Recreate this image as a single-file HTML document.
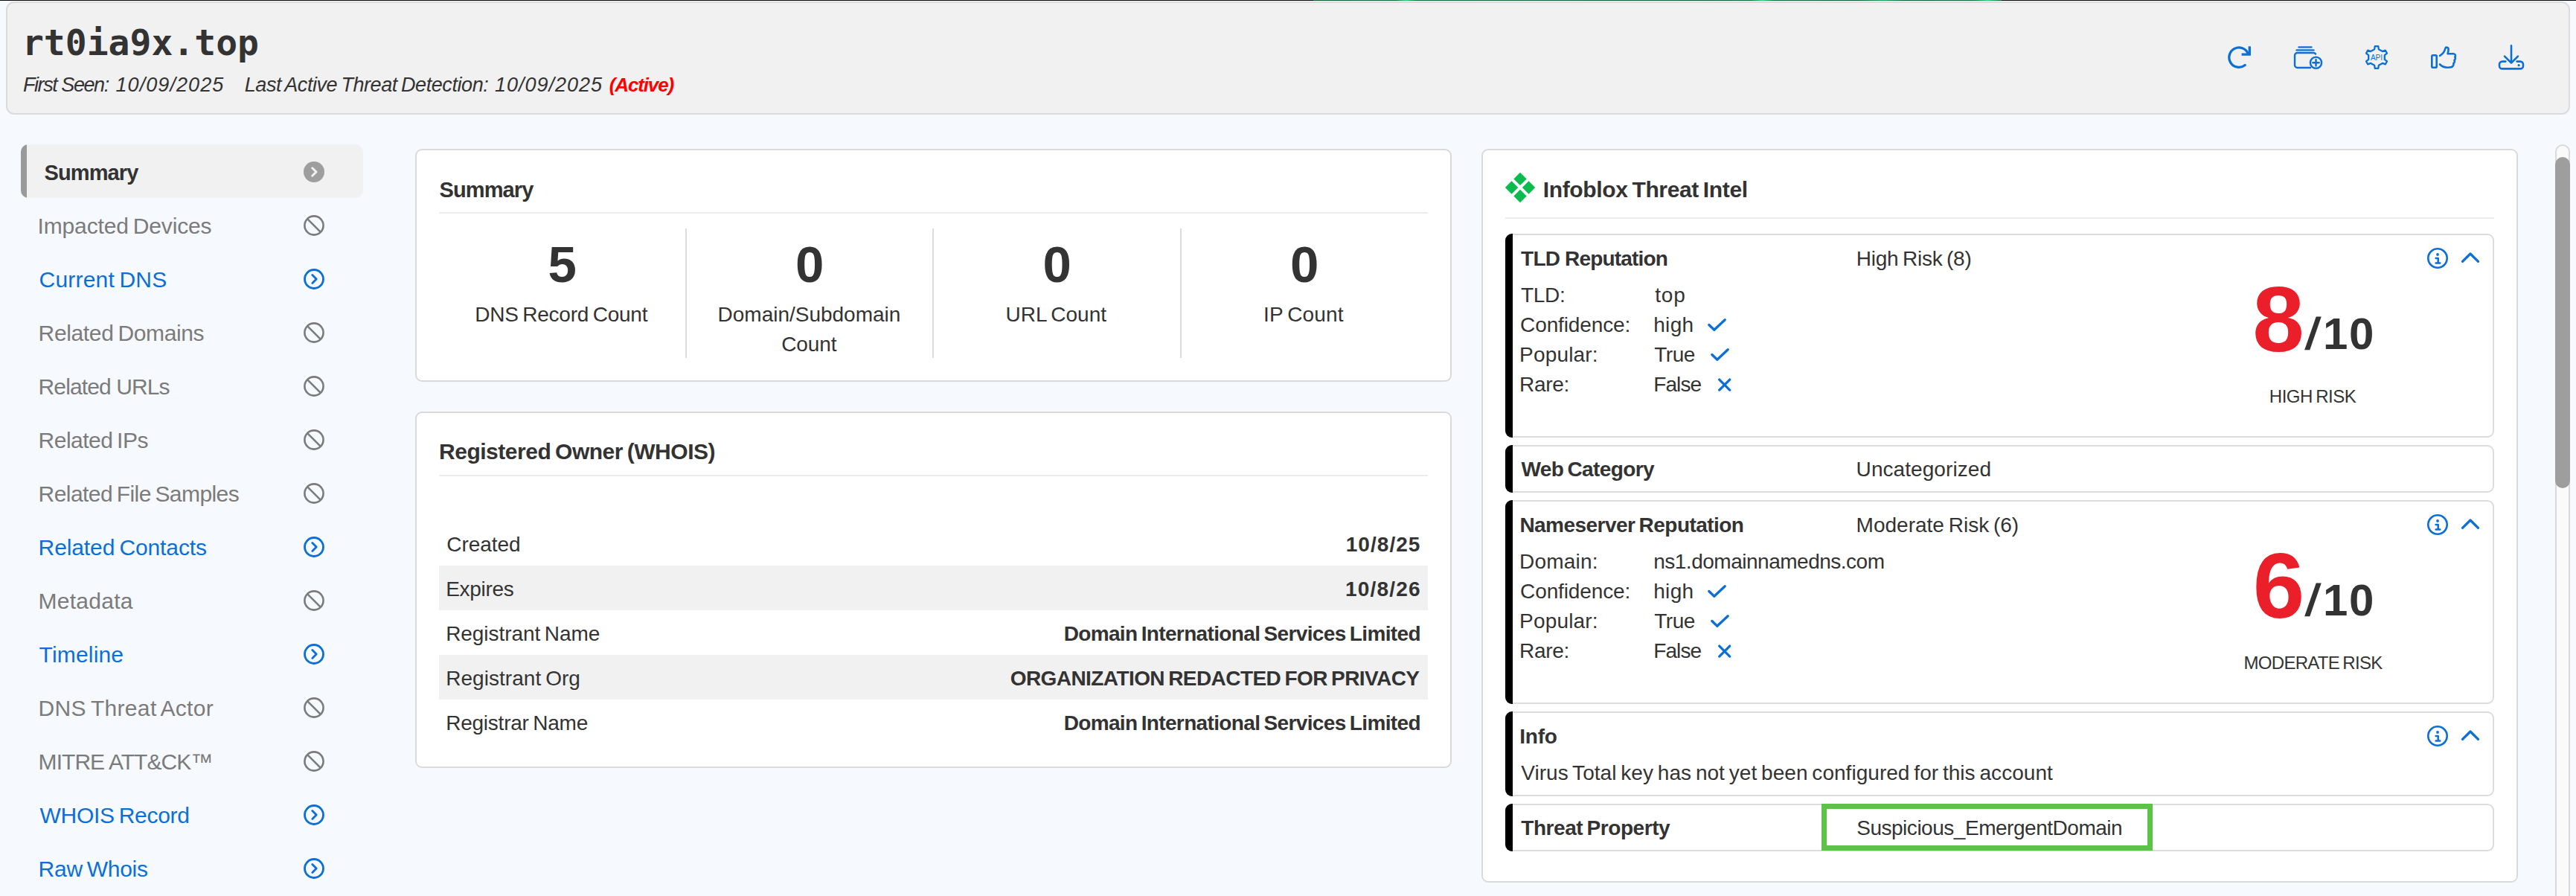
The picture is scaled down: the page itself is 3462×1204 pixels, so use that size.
<!DOCTYPE html>
<html lang="en">
<head>
<meta charset="utf-8">
<title>rt0ia9x.top</title>
<style>
:root{--f:"Liberation Sans",sans-serif;}
*{box-sizing:border-box;margin:0;padding:0;}
html,body{width:3462px;height:1204px;overflow:hidden;}
body{background:#f6f9fe;font-family:var(--f);color:#333;font-size:28px;line-height:40px;position:relative;}
.abs{position:absolute;}
.t{position:absolute;white-space:nowrap;line-height:40px;height:40px;font-weight:normal;}
.topline{position:absolute;left:0;top:0;width:3462px;height:1px;background:#0a0a0a;}
.topline i{position:absolute;left:1765px;top:0;width:925px;height:1px;background:linear-gradient(90deg,#0a5a28 0%,#0b6b30 12%,#1fd46a 13.5%,#0b6b30 15%,#0a5a28 58%,#0b6b30 63.5%,#1fd46a 65.2%,#0b6b30 67%,#0a5a28 79%,#15a551 82.8%,#0a5a28 86%,#0b6b30 96%,#1fd46a 98%,#0a5a28 100%);}
.hdr{position:absolute;left:8px;top:2px;width:3446px;height:152px;background:#f1f1f1;border:2px solid #dbdbdb;border-radius:11px;}
.card{position:absolute;background:#fff;border:2px solid #dadada;border-radius:9px;}
.hr{position:absolute;height:2px;background:#ececec;}
.vr{position:absolute;width:2px;background:#dcdcdc;}
.box{position:absolute;left:2023px;width:1329px;background:#fff;border:2px solid #dcdcdc;border-left:none;border-radius:9px;}
.box:before{content:"";position:absolute;left:0;top:-2px;bottom:-2px;width:10px;background:#000;border-radius:9px 0 0 9px;}
.ic{position:absolute;}
</style>
</head>
<body>
<div class="topline"><i></i></div>
<header>
<div class="hdr"></div>
<h1 class="t" id="title" style="left:29.90px;top:37.01px;font-size:48px;font-weight:bold;font-family:'DejaVu Sans Mono','Liberation Mono',monospace;letter-spacing:0.020px;">rt0ia9x.top</h1>
<div class="t" id="sub1" style="left:31.00px;top:93.50px;font-size:27px;font-style:italic;letter-spacing:-1.440px;">First Seen:</div>
<div class="t" id="sub1b" style="left:155.50px;top:93.50px;font-size:27px;font-style:italic;letter-spacing:1.067px;">10/09/2025</div>
<div class="t" id="sub2" style="left:328.75px;top:93.50px;font-size:27px;font-style:italic;letter-spacing:-0.429px;word-spacing:-1.890px;">Last Active Threat Detection:</div>
<div class="t" id="sub2b" style="left:665.00px;top:93.50px;font-size:27px;font-style:italic;letter-spacing:1.000px;">10/09/2025</div>
<div class="t" id="sub3" style="left:818.75px;top:93.51px;font-size:26px;font-weight:bold;font-style:italic;color:#ff0000;letter-spacing:-1.143px;">(Active)</div>
<svg class="ic" style="left:2990px;top:58px" width="40" height="40" viewBox="0 0 40 40" fill="none" stroke="#0b6fd6" stroke-width="3.3" stroke-linecap="round" stroke-linejoin="round"><path d="M27.2 29.5A13.2 13.2 0 1 1 31.3 14.3"/><path d="M33.3 4.2V15.2H22.6" stroke-linecap="butt" stroke-linejoin="miter"/></svg>
<svg class="ic" style="left:3080px;top:58px" width="44" height="40" viewBox="0 0 44 40" fill="none" stroke="#0b6fd6" stroke-width="2.4" stroke-linecap="round" stroke-linejoin="round"><path d="M9.5 5.4H26.5M6.5 9.4H29.5"/><path d="M32 14.5A3.5 3.5 0 0 0 29 13H7.5A3.5 3.5 0 0 0 4 16.500V29.500A3.500 3.500 0 0 0 7.500 33H25"/><circle cx="32.500" cy="26.200" r="7.600"/><path d="M32.500 22V30.400M28.300 26.200H36.700"/></svg>
<svg class="ic" style="left:3174px;top:56px" width="40" height="42" viewBox="0 0 40 42" fill="none" stroke="#0b6fd6" stroke-width="2.3" stroke-linejoin="round"><path d="M17.12 10.18 L17.76 6.17 L22.24 6.17 L22.88 10.18 L27.93 13.09 L31.72 11.64 L33.97 15.53 L30.81 18.09 L30.81 23.91 L33.97 26.47 L31.72 30.36 L27.93 28.91 L22.88 31.82 L22.24 35.83 L17.76 35.83 L17.12 31.82 L12.07 28.91 L8.28 30.36 L6.03 26.47 L9.19 23.91 L9.19 18.09 L6.03 15.53 L8.28 11.64 L12.07 13.09Z"/><text x="20" y="24.700" font-family="Liberation Sans, sans-serif" font-size="10" fill="#0b6fd6" stroke="none" text-anchor="middle">API</text></svg>
<svg class="ic" style="left:3264px;top:58px" width="40" height="40" viewBox="0 0 40 40" fill="none" stroke="#0b6fd6" stroke-width="2.6" stroke-linecap="round" stroke-linejoin="round"><rect x="4.300" y="16.300" width="6.400" height="16.400" rx="1.500"/><path d="M15 16.800C19 14.500 21.500 10.500 22.300 7.200C23 4.800 26.600 5.300 26.600 8.500C26.600 10.500 26 12.500 25.500 14.200H33.200C36 14.200 36.800 17.200 35.200 18.600C36.400 20 35.800 22.200 34.400 22.900C35.400 24.400 34.700 26.400 33.300 27.100C34 28.800 33 31 31 32C29.500 32.700 27.500 32.700 25 32.700C20.500 32.700 18 31.500 15 28.500"/></svg>
<svg class="ic" style="left:3354px;top:56px" width="42" height="42" viewBox="0 0 42 42" fill="none" stroke="#0b6fd6" stroke-width="2.600" stroke-linecap="round" stroke-linejoin="round"><path d="M21 5.200V28.400M12 19.600L21 28.600L30 19.600"/><path d="M13.400 26.600H9A4 4 0 0 0 5 30.600V32.400A4 4 0 0 0 9 36.400H33A4 4 0 0 0 37 32.400V30.600A4 4 0 0 0 33 26.600H28.600"/><circle cx="31.100" cy="31.700" r="1.600" fill="#0b6fd6" stroke="none"/></svg>
</header>
<nav>
<div class="abs" style="left:28px;top:194px;width:460px;height:72px;background:#f1f1f1;border-radius:10px;overflow:hidden;"><div style="width:8px;height:72px;background:#9a9a9a;"></div></div>
<svg class="ic" style="left:406px;top:214.5px" width="32" height="32" viewBox="0 0 32 32"><circle cx="16" cy="16" r="14" fill="#9e9e9e"/><path d="M13.700 10.800L19 16L13.700 21.200" fill="none" stroke="#f1f1f1" stroke-width="3" stroke-linecap="round" stroke-linejoin="round"/></svg>
<svg class="ic" style="left:406px;top:286.5px" width="32" height="32" viewBox="0 0 32 32" fill="none" stroke="#7b7b7b" stroke-width="2.600"><circle cx="16" cy="16" r="12.600"/><path d="M7.100 7.100L24.900 24.900"/></svg>
<svg class="ic" style="left:406px;top:358.5px" width="32" height="32" viewBox="0 0 32 32" fill="none" stroke="#0b6fd6" stroke-width="2.800" stroke-linecap="round" stroke-linejoin="round"><circle cx="16" cy="16" r="12.500"/><path d="M13.800 10.600L19.200 16L13.800 21.400"/></svg>
<svg class="ic" style="left:406px;top:430.5px" width="32" height="32" viewBox="0 0 32 32" fill="none" stroke="#7b7b7b" stroke-width="2.600"><circle cx="16" cy="16" r="12.600"/><path d="M7.100 7.100L24.900 24.900"/></svg>
<svg class="ic" style="left:406px;top:502.5px" width="32" height="32" viewBox="0 0 32 32" fill="none" stroke="#7b7b7b" stroke-width="2.600"><circle cx="16" cy="16" r="12.600"/><path d="M7.100 7.100L24.900 24.900"/></svg>
<svg class="ic" style="left:406px;top:574.5px" width="32" height="32" viewBox="0 0 32 32" fill="none" stroke="#7b7b7b" stroke-width="2.600"><circle cx="16" cy="16" r="12.600"/><path d="M7.100 7.100L24.900 24.900"/></svg>
<svg class="ic" style="left:406px;top:646.5px" width="32" height="32" viewBox="0 0 32 32" fill="none" stroke="#7b7b7b" stroke-width="2.600"><circle cx="16" cy="16" r="12.600"/><path d="M7.100 7.100L24.900 24.900"/></svg>
<svg class="ic" style="left:406px;top:718.5px" width="32" height="32" viewBox="0 0 32 32" fill="none" stroke="#0b6fd6" stroke-width="2.800" stroke-linecap="round" stroke-linejoin="round"><circle cx="16" cy="16" r="12.500"/><path d="M13.800 10.600L19.200 16L13.800 21.400"/></svg>
<svg class="ic" style="left:406px;top:790.5px" width="32" height="32" viewBox="0 0 32 32" fill="none" stroke="#7b7b7b" stroke-width="2.600"><circle cx="16" cy="16" r="12.600"/><path d="M7.100 7.100L24.900 24.900"/></svg>
<svg class="ic" style="left:406px;top:862.5px" width="32" height="32" viewBox="0 0 32 32" fill="none" stroke="#0b6fd6" stroke-width="2.800" stroke-linecap="round" stroke-linejoin="round"><circle cx="16" cy="16" r="12.500"/><path d="M13.800 10.600L19.200 16L13.800 21.400"/></svg>
<svg class="ic" style="left:406px;top:934.5px" width="32" height="32" viewBox="0 0 32 32" fill="none" stroke="#7b7b7b" stroke-width="2.600"><circle cx="16" cy="16" r="12.600"/><path d="M7.100 7.100L24.900 24.900"/></svg>
<svg class="ic" style="left:406px;top:1006.5px" width="32" height="32" viewBox="0 0 32 32" fill="none" stroke="#7b7b7b" stroke-width="2.600"><circle cx="16" cy="16" r="12.600"/><path d="M7.100 7.100L24.900 24.900"/></svg>
<svg class="ic" style="left:406px;top:1078.5px" width="32" height="32" viewBox="0 0 32 32" fill="none" stroke="#0b6fd6" stroke-width="2.800" stroke-linecap="round" stroke-linejoin="round"><circle cx="16" cy="16" r="12.500"/><path d="M13.800 10.600L19.200 16L13.800 21.400"/></svg>
<svg class="ic" style="left:406px;top:1150.5px" width="32" height="32" viewBox="0 0 32 32" fill="none" stroke="#0b6fd6" stroke-width="2.800" stroke-linecap="round" stroke-linejoin="round"><circle cx="16" cy="16" r="12.500"/><path d="M13.800 10.600L19.200 16L13.800 21.400"/></svg>
<div class="t" id="n0" style="left:59.60px;top:211.81px;font-size:29px;font-weight:bold;letter-spacing:-0.900px;">Summary</div>
<div class="t" id="n1" style="left:50.60px;top:283.81px;font-size:30px;color:#7b7b7b;letter-spacing:-0.160px;word-spacing:-2.100px;">Impacted Devices</div>
<div class="t" id="n2" style="left:52.60px;top:355.81px;font-size:30px;color:#0b6fd6;letter-spacing:0.200px;word-spacing:-2.100px;">Current DNS</div>
<div class="t" id="n3" style="left:51.60px;top:427.81px;font-size:30px;color:#7b7b7b;letter-spacing:-0.357px;word-spacing:-2.100px;">Related Domains</div>
<div class="t" id="n4" style="left:51.60px;top:499.81px;font-size:30px;color:#7b7b7b;letter-spacing:-0.891px;">Related URLs</div>
<div class="t" id="n5" style="left:51.60px;top:571.81px;font-size:30px;color:#7b7b7b;letter-spacing:-0.520px;word-spacing:-2.100px;">Related IPs</div>
<div class="t" id="n6" style="left:51.60px;top:643.81px;font-size:30px;color:#7b7b7b;letter-spacing:-0.568px;word-spacing:-2.100px;">Related File Samples</div>
<div class="t" id="n7" style="left:51.60px;top:715.81px;font-size:30px;color:#0b6fd6;letter-spacing:-0.107px;word-spacing:-2.100px;">Related Contacts</div>
<div class="t" id="n8" style="left:51.60px;top:787.81px;font-size:30px;color:#7b7b7b;letter-spacing:0.257px;">Metadata</div>
<div class="t" id="n9" style="left:52.60px;top:859.81px;font-size:30px;color:#0b6fd6;letter-spacing:0.171px;">Timeline</div>
<div class="t" id="n10" style="left:51.60px;top:931.81px;font-size:30px;color:#7b7b7b;letter-spacing:0.320px;word-spacing:-2.100px;">DNS Threat Actor</div>
<div class="t" id="n11" style="left:51.60px;top:1003.81px;font-size:30px;color:#7b7b7b;letter-spacing:-0.950px;">MITRE ATT&amp;CK™</div>
<div class="t" id="n12" style="left:53.60px;top:1075.81px;font-size:30px;color:#0b6fd6;letter-spacing:-0.291px;word-spacing:-2.100px;">WHOIS Record</div>
<div class="t" id="n13" style="left:51.60px;top:1147.81px;font-size:30px;color:#0b6fd6;letter-spacing:-0.275px;word-spacing:-2.100px;">Raw Whois</div>
</nav>
<main>
<section>
<div class="card" style="left:558px;top:200px;width:1393px;height:313px;"></div>
<div class="hr" style="left:590px;top:285px;width:1329px;"></div>
<div class="vr" style="left:921px;top:307px;height:174px;"></div>
<div class="vr" style="left:1253px;top:307px;height:174px;"></div>
<div class="vr" style="left:1586px;top:307px;height:174px;"></div>
<h2 class="t" id="h_sum" style="left:590.50px;top:235.00px;font-size:29px;font-weight:bold;letter-spacing:-0.900px;">Summary</h2>
<div class="t" id="big0" style="left:736.50px;top:335.61px;font-size:69px;font-weight:bold;">5</div>
<div class="t" id="lbl0" style="left:638.30px;top:403.01px;font-size:28px;letter-spacing:-0.240px;word-spacing:-1.960px;">DNS Record Count</div>
<div class="t" id="big1" style="left:1069.00px;top:335.61px;font-size:69px;font-weight:bold;">0</div>
<div class="t" id="lbl1" style="left:964.60px;top:403.01px;font-size:28px;letter-spacing:-0.013px;">Domain/Subdomain</div>
<div class="t" id="big2" style="left:1401.50px;top:335.61px;font-size:69px;font-weight:bold;">0</div>
<div class="t" id="lbl2" style="left:1351.50px;top:403.01px;font-size:28px;word-spacing:-1.960px;">URL Count</div>
<div class="t" id="big3" style="left:1734.00px;top:335.61px;font-size:69px;font-weight:bold;">0</div>
<div class="t" id="lbl3" style="left:1698.00px;top:403.01px;font-size:28px;letter-spacing:0.143px;word-spacing:-1.960px;">IP Count</div>
<div class="t" id="lbl1b" style="left:1050.20px;top:443.01px;font-size:28px;letter-spacing:-0.100px;">Count</div>
</section>
<section>
<div class="card" style="left:558px;top:553px;width:1393px;height:479px;"></div>
<div class="hr" style="left:590px;top:638px;width:1329px;"></div>
<div class="abs" style="left:590px;top:760px;width:1329px;height:60px;background:#f1f1f1;"></div>
<div class="abs" style="left:590px;top:880px;width:1329px;height:60px;background:#f1f1f1;"></div>
<h2 class="t" id="h_who" style="left:590.00px;top:587.00px;font-size:30px;font-weight:bold;letter-spacing:-0.478px;word-spacing:-2.100px;">Registered Owner (WHOIS)</h2>
<div class="t" id="wk0" style="left:600.20px;top:711.81px;font-size:28px;letter-spacing:-0.033px;">Created</div>
<div class="t" id="wv0" style="left:1808.64px;top:711.81px;font-size:28px;font-weight:bold;letter-spacing:1.067px;">10/8/25</div>
<div class="t" id="wk1" style="left:599.20px;top:771.81px;font-size:28px;letter-spacing:-0.300px;">Expires</div>
<div class="t" id="wv1" style="left:1808.04px;top:771.81px;font-size:28px;font-weight:bold;letter-spacing:1.167px;">10/8/26</div>
<div class="t" id="wk2" style="left:599.20px;top:831.81px;font-size:28px;letter-spacing:-0.071px;word-spacing:-1.960px;">Registrant Name</div>
<div class="t" id="wv2" style="left:1429.64px;top:831.81px;font-size:28px;font-weight:bold;letter-spacing:-0.639px;word-spacing:-1.960px;">Domain International Services Limited</div>
<div class="t" id="wk3" style="left:599.20px;top:891.81px;font-size:28px;letter-spacing:0.046px;word-spacing:-1.960px;">Registrant Org</div>
<div class="t" id="wv3" style="left:1357.76px;top:891.81px;font-size:28px;font-weight:bold;letter-spacing:-0.575px;word-spacing:-1.960px;">ORGANIZATION REDACTED FOR PRIVACY</div>
<div class="t" id="wk4" style="left:599.20px;top:951.81px;font-size:28px;letter-spacing:-0.231px;word-spacing:-1.960px;">Registrar Name</div>
<div class="t" id="wv4" style="left:1429.64px;top:951.81px;font-size:28px;font-weight:bold;letter-spacing:-0.639px;word-spacing:-1.960px;">Domain International Services Limited</div>
</section>
<section>
<div class="card" style="left:1991px;top:200px;width:1393px;height:986px;"></div>
<svg class="ic" style="left:2022px;top:231px" width="42" height="42" viewBox="0 0 42 42"><g fill="#0abb4d"><path d="M21 0.70L29.70 9.4L21 18.10L12.30 9.4Z"/><path d="M21 23.80L29.70 32.5L21 41.20L12.30 32.5Z"/><path d="M9.5 12.30L18.20 21L9.5 29.70L0.80 21Z"/><path d="M32.5 12.30L41.20 21L32.5 29.70L23.80 21Z"/></g></svg>
<div class="hr" style="left:2023px;top:292px;width:1329px;"></div>

<div class="box" style="top:314px;height:274px;"></div>
<svg class="ic" style="left:2292px;top:425px" width="32" height="24" viewBox="0 0 32 24" fill="none" stroke="#0b6fd6" stroke-width="3.300" stroke-linecap="round" stroke-linejoin="round"><path d="M4.800 11.500L11.800 18.300L26.200 4.700"/></svg><svg class="ic" style="left:2296px;top:465px" width="32" height="24" viewBox="0 0 32 24" fill="none" stroke="#0b6fd6" stroke-width="3.300" stroke-linecap="round" stroke-linejoin="round"><path d="M4.800 11.500L11.800 18.300L26.200 4.700"/></svg><svg class="ic" style="left:2306px;top:505px" width="24" height="24" viewBox="0 0 24 24" fill="none" stroke="#0b6fd6" stroke-width="3.300" stroke-linecap="round"><path d="M4.700 5.100L18.700 19.100M18.700 5.100L4.700 19.100"/></svg>
<svg class="ic" style="left:3260px;top:330.5px" width="32" height="32" viewBox="0 0 32 32" fill="none" stroke="#0b6fd6" stroke-width="2.600" stroke-linecap="round" stroke-linejoin="round"><circle cx="16" cy="16" r="12.700"/><circle cx="16" cy="11" r="1.900" fill="#0b6fd6" stroke="none"/><path d="M13.600 15.900H16.700V22.300M13.600 22.400H19.300" stroke-width="2.500"/></svg><svg class="ic" style="left:3304px;top:330.5px" width="32" height="32" viewBox="0 0 32 32" fill="none" stroke="#0b6fd6" stroke-width="3.300" stroke-linecap="round" stroke-linejoin="round"><path d="M5.500 20.400L16 10L26.500 20.400"/></svg>

<div class="box" style="top:598px;height:64px;"></div>

<div class="box" style="top:672px;height:274px;"></div>
<svg class="ic" style="left:2292px;top:783px" width="32" height="24" viewBox="0 0 32 24" fill="none" stroke="#0b6fd6" stroke-width="3.300" stroke-linecap="round" stroke-linejoin="round"><path d="M4.800 11.500L11.800 18.300L26.200 4.700"/></svg><svg class="ic" style="left:2296px;top:823px" width="32" height="24" viewBox="0 0 32 24" fill="none" stroke="#0b6fd6" stroke-width="3.300" stroke-linecap="round" stroke-linejoin="round"><path d="M4.800 11.500L11.800 18.300L26.200 4.700"/></svg><svg class="ic" style="left:2306px;top:863px" width="24" height="24" viewBox="0 0 24 24" fill="none" stroke="#0b6fd6" stroke-width="3.300" stroke-linecap="round"><path d="M4.700 5.100L18.700 19.100M18.700 5.100L4.700 19.100"/></svg>
<svg class="ic" style="left:3260px;top:688.5px" width="32" height="32" viewBox="0 0 32 32" fill="none" stroke="#0b6fd6" stroke-width="2.600" stroke-linecap="round" stroke-linejoin="round"><circle cx="16" cy="16" r="12.700"/><circle cx="16" cy="11" r="1.900" fill="#0b6fd6" stroke="none"/><path d="M13.600 15.900H16.700V22.300M13.600 22.400H19.300" stroke-width="2.500"/></svg><svg class="ic" style="left:3304px;top:688.5px" width="32" height="32" viewBox="0 0 32 32" fill="none" stroke="#0b6fd6" stroke-width="3.300" stroke-linecap="round" stroke-linejoin="round"><path d="M5.500 20.400L16 10L26.500 20.400"/></svg>

<div class="box" style="top:956px;height:114px;"></div>
<svg class="ic" style="left:3260px;top:972.5px" width="32" height="32" viewBox="0 0 32 32" fill="none" stroke="#0b6fd6" stroke-width="2.600" stroke-linecap="round" stroke-linejoin="round"><circle cx="16" cy="16" r="12.700"/><circle cx="16" cy="11" r="1.900" fill="#0b6fd6" stroke="none"/><path d="M13.600 15.900H16.700V22.300M13.600 22.400H19.300" stroke-width="2.500"/></svg><svg class="ic" style="left:3304px;top:972.5px" width="32" height="32" viewBox="0 0 32 32" fill="none" stroke="#0b6fd6" stroke-width="3.300" stroke-linecap="round" stroke-linejoin="round"><path d="M5.500 20.400L16 10L26.500 20.400"/></svg>

<div class="box" style="top:1080px;height:64px;"></div>
<div class="abs" style="left:2447.5px;top:1079.5px;width:445px;height:63px;border:7px solid #5cc248;"></div>
<h2 class="t" id="h_ti" style="left:2073.80px;top:235.00px;font-size:30px;font-weight:bold;letter-spacing:-0.360px;word-spacing:-2.100px;">Infoblox Threat Intel</h2>
<div class="t" id="tld_h" style="left:2044.10px;top:327.60px;font-size:28px;font-weight:bold;letter-spacing:-0.815px;">TLD Reputation</div>
<div class="t" id="tld_r" style="left:2494.70px;top:327.60px;font-size:28px;letter-spacing:-0.233px;word-spacing:-1.960px;">High Risk (8)</div>
<div class="t" id="tk0" style="left:2044.10px;top:377.31px;font-size:28px;letter-spacing:-0.333px;">TLD:</div>
<div class="t" id="tv0" style="left:2224.20px;top:377.31px;font-size:28px;letter-spacing:0.900px;">top</div>
<div class="t" id="tk1" style="left:2043.10px;top:417.31px;font-size:28px;letter-spacing:-0.120px;">Confidence:</div>
<div class="t" id="tv1" style="left:2222.20px;top:417.31px;font-size:28px;letter-spacing:0.333px;">high</div>
<div class="t" id="tk2" style="left:2042.10px;top:457.31px;font-size:28px;letter-spacing:0.171px;">Popular:</div>
<div class="t" id="tv2" style="left:2223.20px;top:457.31px;font-size:28px;letter-spacing:-0.467px;">True</div>
<div class="t" id="tk3" style="left:2042.10px;top:497.31px;font-size:28px;letter-spacing:-0.300px;">Rare:</div>
<div class="t" id="tv3" style="left:2222.20px;top:497.31px;font-size:28px;letter-spacing:-0.900px;">False</div>
<div class="t" id="s8" style="left:3027.20px;top:409.31px;font-size:125px;font-weight:bold;color:#ea1f29;">8</div>
<div class="t" id="s8s" style="left:3099.50px;top:429.00px;font-size:60px;font-weight:bold;transform:skewX(-9deg);">/</div>
<div class="t" id="s8b" style="left:3122.00px;top:429.00px;font-size:60px;font-weight:bold;letter-spacing:1.600px;">10</div>
<div class="t" id="s8l" style="left:3049.80px;top:513.40px;font-size:24px;letter-spacing:-0.500px;word-spacing:-1.680px;">HIGH RISK</div>
<div class="t" id="wc_h" style="left:2044.40px;top:611.01px;font-size:28px;font-weight:bold;letter-spacing:-0.600px;word-spacing:-1.960px;">Web Category</div>
<div class="t" id="wc_v" style="left:2494.60px;top:611.01px;font-size:28px;letter-spacing:0.067px;">Uncategorized</div>
<div class="t" id="ns_h" style="left:2042.40px;top:685.60px;font-size:28px;font-weight:bold;letter-spacing:-0.540px;word-spacing:-1.960px;">Nameserver Reputation</div>
<div class="t" id="ns_r" style="left:2494.60px;top:685.60px;font-size:28px;word-spacing:-1.960px;">Moderate Risk (6)</div>
<div class="t" id="nk0" style="left:2042.10px;top:735.31px;font-size:28px;letter-spacing:0.200px;">Domain:</div>
<div class="t" id="nv0" style="left:2222.20px;top:735.31px;font-size:28px;letter-spacing:-0.490px;">ns1.domainnamedns.com</div>
<div class="t" id="nk1" style="left:2043.10px;top:775.31px;font-size:28px;letter-spacing:-0.120px;">Confidence:</div>
<div class="t" id="nv1" style="left:2222.20px;top:775.31px;font-size:28px;letter-spacing:0.333px;">high</div>
<div class="t" id="nk2" style="left:2042.10px;top:815.31px;font-size:28px;letter-spacing:0.171px;">Popular:</div>
<div class="t" id="nv2" style="left:2223.20px;top:815.31px;font-size:28px;letter-spacing:-0.467px;">True</div>
<div class="t" id="nk3" style="left:2042.10px;top:855.31px;font-size:28px;letter-spacing:-0.300px;">Rare:</div>
<div class="t" id="nv3" style="left:2222.20px;top:855.31px;font-size:28px;letter-spacing:-0.900px;">False</div>
<div class="t" id="s6" style="left:3027.70px;top:767.31px;font-size:125px;font-weight:bold;color:#ea1f29;">6</div>
<div class="t" id="s6s" style="left:3099.50px;top:787.00px;font-size:60px;font-weight:bold;transform:skewX(-9deg);">/</div>
<div class="t" id="s6b" style="left:3122.00px;top:787.00px;font-size:60px;font-weight:bold;letter-spacing:1.600px;">10</div>
<div class="t" id="s6l" style="left:3015.60px;top:871.40px;font-size:24px;letter-spacing:-0.717px;word-spacing:-1.680px;">MODERATE RISK</div>
<div class="t" id="in_h" style="left:2042.30px;top:969.70px;font-size:28px;font-weight:bold;letter-spacing:-0.267px;">Info</div>
<div class="t" id="in_v" style="left:2044.30px;top:1019.20px;font-size:28px;letter-spacing:0.034px;word-spacing:-1.960px;">Virus Total key has not yet been configured for this account</div>
<div class="t" id="tp_h" style="left:2044.30px;top:1093.41px;font-size:28px;font-weight:bold;letter-spacing:-0.443px;word-spacing:-1.960px;">Threat Property</div>
<div class="t" id="tp_v" style="left:2495.20px;top:1093.41px;font-size:28px;letter-spacing:-0.475px;">Suspicious_EmergentDomain</div>
</section>
</main>
<div class="abs" style="left:3434px;top:194px;width:20px;height:1100px;background:#fafafa;border:2px solid #d9d9d9;border-radius:10px;"></div>
<div class="abs" style="left:3434px;top:211px;width:20px;height:445px;background:#9e9e9e;border-radius:10px;"></div>
</body>
</html>
